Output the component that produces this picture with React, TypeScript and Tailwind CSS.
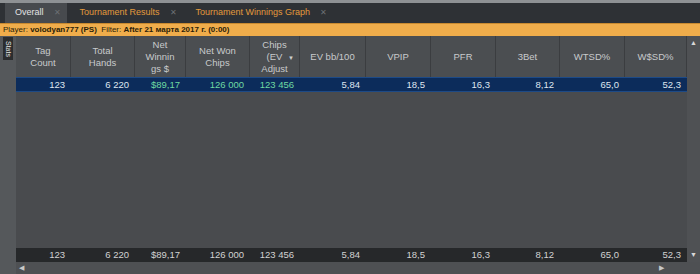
const cols = "grid grid-cols-[55px_64px_51px_64px_50px_66px_65px_65px_64px_65px_62px]";

const headers: string[][] = [
  ["Tag", "Count"],
  ["Total", "Hands"],
  ["Net", "Winnin", "gs $"],
  ["Net Won", "Chips"],
  ["Chips", "(EV", "Adjust"],
  ["EV bb/100"],
  ["VPIP"],
  ["PFR"],
  ["3Bet"],
  ["WTSD%"],
  ["W$SD%"],
];

const values = ["123", "6 220", "$89,17", "126 000", "123 456", "5,84", "18,5", "16,3", "8,12", "65,0", "52,3"];
const green = [2, 3, 4];

function Tab({ label, active }: { label: string; active?: boolean }) {
  return (
    <div
      className={`h-full flex items-center gap-[10px] pl-[10px] pr-[6px] mr-[3px] ${
        active ? "bg-[#474a4e] text-[#e4e4e4]" : "text-[#e39a3c]"
      }`}
    >
      <span>{label}</span>
      <span className="text-[#6c6f73] text-[8px]">✕</span>
    </div>
  );
}

export default function App() {
  return (
    <div className="w-[700px] h-[274px] bg-[#494b4e] flex flex-col overflow-hidden font-['Liberation_Sans',sans-serif] text-[9px]">
      <div className="h-[3px] bg-[#8e9194]" />

      {/* tabs */}
      <div className="h-[20px] bg-[#2e3135] flex pl-[5px]">
        <Tab label="Overall" active />
        <Tab label="Tournament Results" />
        <Tab label="Tournament Winnings Graph" />
      </div>

      {/* filter bar */}
      <div className="h-[13px] bg-[#f0ad4b] border-t border-[#c98a30] flex items-center pl-[3px] text-[#2b1d08] text-[8px] leading-none">
        <span>Player:&nbsp;</span>
        <span className="font-bold">volodyan777 (PS)</span>
        <span>&nbsp;&nbsp;Filter:&nbsp;</span>
        <span className="font-bold">After 21 марта 2017 г. (0:00)</span>
      </div>

      <div className="flex-1 flex min-h-0">
        {/* side strip */}
        <div className="w-[16px] bg-[#55585b] pt-[1px] pl-[3px]">
          <div className="w-[10px] h-[23px] bg-[#2b2d2f] text-[#e6e6e6] text-[7px] flex items-center justify-center [writing-mode:vertical-rl]">
            Stats
          </div>
        </div>

        <div className="flex-1 flex flex-col min-w-0">
          <div className="flex-1 flex min-h-0">
            {/* table */}
            <div className="w-[671px] flex flex-col text-[9.5px]">
              <div className={`${cols} h-[41px] bg-[#4b4e51] text-[#c8cacc] leading-[12px]`}>
                {headers.map((h, i) => (
                  <div key={i} className="relative border-r border-[#3b3d40] flex flex-col items-center justify-center text-center">
                    {h.map((l) => (
                      <span key={l}>{l}</span>
                    ))}
                    {i === 4 && <span className="absolute right-[5px] top-[16px] text-[6px] text-[#d0d0d0]">▼</span>}
                  </div>
                ))}
              </div>
              <div className={`${cols} h-[15px] bg-[#0c2c5b] border-y border-[#1d4a86] items-center`}>
                {values.map((v, i) => (
                  <div key={i} className={`text-right pr-[6px] ${green.includes(i) ? "text-[#6fd9a2]" : "text-[#dfe6f0]"}`}>
                    {v}
                  </div>
                ))}
              </div>
              <div className="flex-1" />
              <div className={`${cols} h-[14px] bg-[#26282a] items-center text-[#d2d2d2]`}>
                {values.map((v, i) => (
                  <div key={i} className="text-right pr-[6px]">
                    {v}
                  </div>
                ))}
              </div>
            </div>

            {/* vertical scrollbar */}
            <div className="w-[13px] bg-[#4f5154] flex flex-col items-center justify-between pt-[2px] pb-[2px] text-[#d8d8d8] text-[7px]">
              <span>▲</span>
              <span>▼</span>
            </div>
          </div>

          {/* horizontal scrollbar */}
          <div className="h-[12px] bg-[#4e5053] flex items-center justify-between pl-[3px] pr-[36px] text-[#c8c8c8] text-[7px]">
            <span>◀</span>
            <span>▶</span>
          </div>
        </div>
      </div>
    </div>
  );
}
